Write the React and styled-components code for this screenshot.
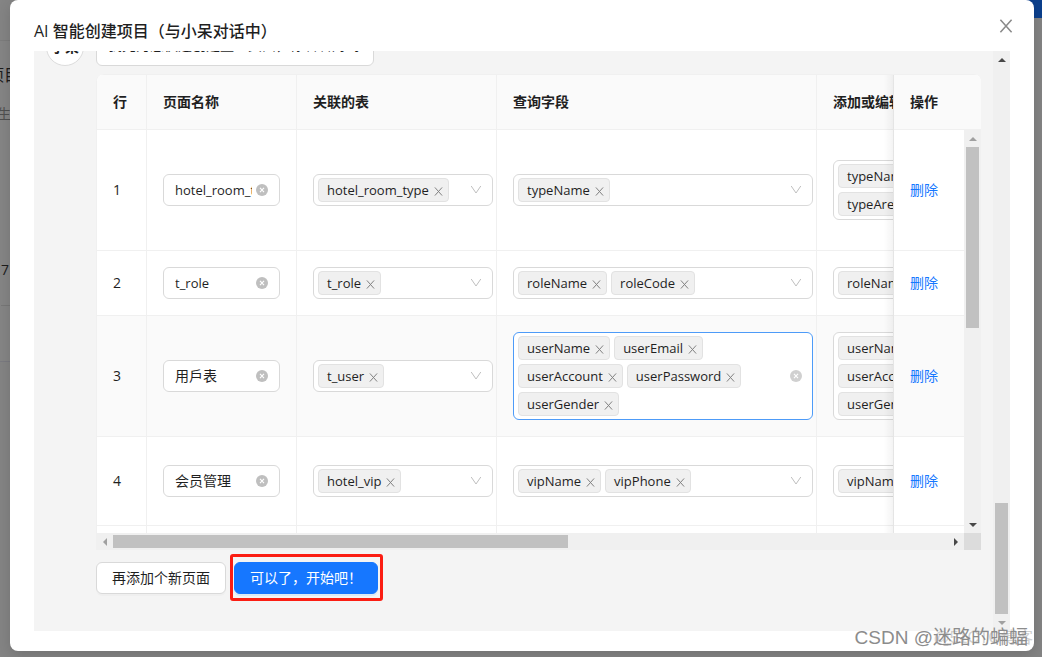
import React from 'react';
import styled, { createGlobalStyle, css } from 'styled-components';

const UI_FONT = "'Open Sans', 'Noto Sans CJK SC', sans-serif";

const Global = createGlobalStyle`
  * { box-sizing: border-box; }
  body {
    margin: 0;
    overflow: hidden;
    font-family: ${UI_FONT};
    font-size: 14px;
    line-height: 22px;
    color: #1f1f1f;
  }
  button, input { font: inherit; color: inherit; }
`;

const Screen = styled.div`
  position: relative;
  height: 100vh;
  min-height: 420px;
  overflow: hidden;
  background: #848484;
`;

const Behind = styled.div`
  position: absolute;
  inset: 0;
  display: flex;
  justify-content: space-between;
`;

const BehindList = styled.div`
  width: 200px;
  color: #1c1c1c;
  padding-top: 40px;
`;

const BehindCard = styled.div`
  border-top: 1px solid #7c7c7c;
  background: #858585;
  height: 322px;
  padding-top: 22px;
  border-bottom: 1px solid #7a7a80;
`;

const BehindTitle = styled.div`
  margin-left: -12px;
  font-size: 16px;
  line-height: 24px;
`;

const BehindNote = styled.div`
  margin: 16px 0 0 -17px;
  color: #505050;
`;

const BehindCount = styled.div`
  margin: 134px 0 0 1px;
  padding-bottom: 24px;
  border-bottom: 1px solid #777777;
`;

const BehindBar = styled.div`
  width: 60px;
  height: 18px;
  background: #0b3f8c;
`;

const Dialog = styled.section`
  position: relative;
  display: flex;
  flex-direction: column;
  height: calc(100% - 6px);
  margin: 0 8px 0 10px;
  padding: 20px 24px;
  background: #ffffff;
  border-radius: 8px;
  box-shadow: 0 4px 14px rgba(0, 0, 0, 0.14);
`;

const DialogHead = styled.header`
  display: flex;
  justify-content: space-between;
  align-items: flex-start;
  height: 31px;
  flex: none;
`;

const DialogTitle = styled.h1`
  margin: 0;
  font-size: 16px;
  line-height: 22px;
  font-weight: 500;
`;

const CloseButton = styled.button`
  display: flex;
  align-items: center;
  justify-content: center;
  width: 22px;
  height: 22px;
  margin: -5px -7px 0 0;
  padding: 0;
  border: 0;
  background: none;
  color: #8a8a8a;
`;

const ChatArea = styled.div`
  flex: 1;
  min-height: 0;
  display: flex;
  background: #f4f4f4;
`;

const ChatScroll = styled.div`
  flex: 1;
  min-width: 0;
  overflow: hidden;
`;

const Message = styled.div`
  display: flex;
  align-items: flex-end;
  gap: 12px;
  margin-top: -31px;
  padding-left: 12px;
`;

const Avatar = styled.div`
  flex: none;
  width: 38px;
  height: 38px;
  border: 1px solid #dcdcdc;
  border-radius: 50%;
  background: #ffffff;
  font-weight: 700;
  line-height: 36px;
  text-align: center;
`;

const Bubble = styled.p`
  margin: 0;
  width: 278px;
  padding: 13px 11px 9px;
  border: 1px solid #d9d9d9;
  border-radius: 6px;
  background: #ffffff;
  white-space: nowrap;
`;

const Work = styled.div`
  margin: 8px 12px 0 62px;
`;

const Grid = styled.div`
  border-left: 1px solid #f0f0f0;
  border-radius: 8px 8px 0 0;
  overflow: hidden;
  background: #ffffff;
`;

const HeadView = styled.div`
  overflow: hidden;
`;

const BodyFrame = styled.div`
  display: grid;
  grid-template-columns: minmax(0, 1fr) 17px;
  grid-template-rows: minmax(0, 1fr) 17px;
  height: 420px;
  margin-left: -1px;
`;

const BodyView = styled.div`
  overflow: hidden;
  border-left: 1px solid #f0f0f0;
`;

const Corner = styled.div`
  background: #dcdcdc;
`;

const DataTable = styled.table`
  width: ${(p) => (p.$gutter ? 1128 : 1111)}px;
  table-layout: fixed;
  border-collapse: separate;
  border-spacing: 0;
`;

const cell = css`
  padding: 0 ${(p) => (p.$wide ? 3 : 16)}px 0 16px;
  border-right: 1px solid #f0f0f0;
  border-bottom: 1px solid #f0f0f0;
  text-align: left;
`;

const pinned = css`
  position: sticky;
  right: 0;
  z-index: 1;
  border-left: 1px solid #f0f0f0;
  border-right: 0;
  &::before {
    content: '';
    position: absolute;
    top: 0;
    bottom: -1px;
    right: 100%;
    width: 10px;
    background: linear-gradient(to left, rgba(5, 5, 5, 0.05), rgba(5, 5, 5, 0));
    pointer-events: none;
  }
`;

const Th = styled.th`
  ${cell}
  height: 56px;
  border-top: 1px solid #f0f0f0;
  background: #fafafa;
  font-weight: 600;
  white-space: nowrap;
  ${(p) => p.$pinned && pinned}
`;

const Td = styled.td`
  ${cell}
  height: ${(p) => p.$height}px;
  background: ${(p) => (p.$active ? '#fafafa' : '#ffffff')};
  ${(p) => p.$pinned && pinned}
`;

const NameBox = styled.label`
  display: flex;
  align-items: center;
  gap: 4px;
  width: 117px;
  height: 32px;
  padding: 0 11px;
  border: 1px solid #d9d9d9;
  border-radius: 6px;
  background: #ffffff;
`;

const NameInput = styled.input`
  flex: 1;
  min-width: 0;
  padding: 0;
  border: 0;
  outline: 0;
  background: none;
  font-size: ${(p) => (p.$latin ? 13 : 14)}px;
`;

const IconButton = styled.button`
  display: flex;
  flex: none;
  padding: 0;
  border: 0;
  background: none;
  color: ${(p) => p.$color || '#bfbfbf'};
`;

const Picker = styled.div`
  display: flex;
  align-items: center;
  min-height: 32px;
  padding: 3px 10px 3px 4px;
  border: 1px solid ${(p) => (p.$focused ? '#4d9bf8' : '#d9d9d9')};
  border-radius: 6px;
  background: #ffffff;
`;

const Tags = styled.ul`
  display: flex;
  flex: 1;
  flex-wrap: wrap;
  gap: 4px;
  margin: 0;
  padding: 0 20px 0 0;
  list-style: none;
`;

const Tag = styled.li`
  display: flex;
  align-items: center;
  gap: 5px;
  height: 24px;
  padding: 0 5px 0 8px;
  border: 1px solid #e2e2e2;
  border-radius: 4px;
  background: #f0f0f0;
  font-size: 13px;
`;

const TagRemove = styled(IconButton)`
  padding-top: 2px;
`;

const RemoveLink = styled.a`
  color: #1677ff;
  text-decoration: none;
`;

const Bar = styled.div`
  display: flex;
  flex-direction: ${(p) => (p.$across ? 'row' : 'column')};
  align-items: center;
  background: #f0f0f0;
  ${(p) => (p.$across ? 'height: 17px;' : 'width: 17px;')}
`;

const BarArrow = styled.button`
  display: flex;
  flex: none;
  align-items: center;
  justify-content: center;
  width: 17px;
  height: 17px;
  padding: 0;
  border: 0;
  background: none;
  color: ${(p) => (p.$dim ? '#a0a0a0' : '#484848')};
`;

const Run = styled.div`
  display: flex;
  flex: 1;
  flex-direction: ${(p) => (p.$across ? 'row' : 'column')};
  justify-content: ${(p) => (p.$end ? 'flex-end' : 'flex-start')};
`;

const Thumb = styled.div`
  background: #c1c1c1;
  ${(p) =>
    p.$across
      ? css`width: ${p.$length}; height: 13px;`
      : css`width: 13px; height: ${p.$length};`}
`;

const Actions = styled.div`
  display: flex;
  gap: 8px;
  padding-top: 12px;
`;

const ActionButton = styled.button`
  height: 32px;
  padding: 0 15px;
  border: 1px solid ${(p) => (p.$primary ? '#1677ff' : '#d9d9d9')};
  border-radius: 6px;
  background: ${(p) => (p.$primary ? '#1677ff' : '#ffffff')};
  color: ${(p) => (p.$primary ? '#ffffff' : '#1f1f1f')};
  box-shadow: 0 2px 0 ${(p) => (p.$primary ? 'rgba(5,145,255,0.1)' : 'rgba(0,0,0,0.02)')};
  white-space: nowrap;
`;

const Marked = styled.div`
  position: relative;
  &::after {
    content: '';
    position: absolute;
    inset: -8px -5px -7px -4px;
    border: 3px solid #fb1d12;
    border-radius: 3px;
    pointer-events: none;
  }
`;

const Watermark = styled.div`
  position: absolute;
  right: 14px;
  bottom: 6px;
  font-family: 'Liberation Sans', 'Noto Sans CJK SC', sans-serif;
  font-size: 19px;
  line-height: 26px;
  color: #8c8c8c;
`;

const GhostMark = styled(Watermark)`
  right: 9px;
  font-size: 16px;
  color: #d0d0d0;
`;

const Cross = ({ size }) => (
  <svg width={size} height={size} viewBox="0 0 10 10" fill="none" stroke="currentColor" aria-hidden="true">
    <path d="M1 .5 9 9.5M9 .5 1 9.5" strokeWidth="1.1" />
  </svg>
);

const ClearMark = () => (
  <svg width="12" height="12" viewBox="0 0 12 12" aria-hidden="true">
    <circle cx="6" cy="6" r="6" fill="currentColor" />
    <path d="M4 3.8 8 8.2M8 3.8 4 8.2" stroke="#fff" strokeWidth="1.1" />
  </svg>
);

const Chevron = () => (
  <svg width="12" height="12" viewBox="0 0 12 12" fill="none" stroke="#bfbfbf" aria-hidden="true">
    <path d="M1.2 2 6 9 10.8 2" />
  </svg>
);

const triangles = {
  up: 'M0 6 4 2 8 6Z',
  down: 'M0 2 4 6 8 2Z',
  left: 'M6 0 2 4 6 8Z',
  right: 'M2 0 6 4 2 8Z',
};

const Arrow = ({ to, dim }) => (
  <BarArrow type="button" tabIndex={-1} aria-label={to} $dim={dim}>
    <svg width="8" height="8" viewBox="0 0 8 8" fill="currentColor" aria-hidden="true">
      <path d={triangles[to]} />
    </svg>
  </BarArrow>
);

function ScrollTrack({ across, length, end, dim }) {
  const [first, last] = across ? ['left', 'right'] : ['up', 'down'];
  return (
    <Bar $across={across}>
      <Arrow to={first} dim={dim === 'first'} />
      <Run $across={across} $end={end}>
        <Thumb $across={across} $length={length} />
      </Run>
      <Arrow to={last} dim={dim === 'last'} />
    </Bar>
  );
}

function TagPicker({ tags, focused }) {
  return (
    <Picker $focused={focused}>
      <Tags>
        {tags.map((tag) => (
          <Tag key={tag}>
            {tag}
            <TagRemove type="button" aria-label={`移除 ${tag}`} $color="#808080">
              <Cross size={9} />
            </TagRemove>
          </Tag>
        ))}
      </Tags>
      {focused ? (
        <IconButton type="button" aria-label="清空" $color="#d0d0d0">
          <ClearMark />
        </IconButton>
      ) : (
        <Chevron />
      )}
    </Picker>
  );
}

const rows = [
  {
    name: 'hotel_room_type',
    height: 121,
    table: ['hotel_room_type'],
    query: ['typeName'],
    edit: ['typeName', 'typePrice', 'typeArea', 'typeBed'],
  },
  { name: 't_role', height: 65, table: ['t_role'], query: ['roleName', 'roleCode'], edit: ['roleName', 'roleCode'] },
  {
    name: '用戶表',
    height: 121,
    active: true,
    table: ['t_user'],
    query: ['userName', 'userEmail', 'userAccount', 'userPassword', 'userGender'],
    edit: ['userName', 'userEmail', 'userAccount', 'userPassword', 'userGender'],
  },
  { name: '会员管理', height: 89, table: ['hotel_vip'], query: ['vipName', 'vipPhone'], edit: ['vipName', 'vipPhone'] },
  { name: '', height: 89, table: [], query: [], edit: [] },
];

const Columns = ({ last }) => (
  <colgroup>
    {[50, 150, 200, 320, 320, last].map((width, i) => (
      <col key={i} width={width} />
    ))}
  </colgroup>
);

function PageTable() {
  return (
    <Grid>
      <HeadView>
        <DataTable $gutter>
          <Columns last={88} />
          <thead>
            <tr>
              <Th>行</Th>
              <Th>页面名称</Th>
              <Th>关联的表</Th>
              <Th>查询字段</Th>
              <Th>添加或编辑字段</Th>
              <Th $pinned>操作</Th>
            </tr>
          </thead>
        </DataTable>
      </HeadView>
      <BodyFrame>
        <BodyView>
          <DataTable>
            <Columns last={71} />
            <tbody>
              {rows.map((row, i) => {
                const look = { $height: row.height, $active: row.active };
                return (
                  <tr key={i}>
                    <Td {...look}>{i + 1}</Td>
                    <Td {...look}>
                      <NameBox>
                        <NameInput aria-label="页面名称" defaultValue={row.name} $latin={/^\w+$/.test(row.name)} />
                        <IconButton type="button" aria-label="清空名称">
                          <ClearMark />
                        </IconButton>
                      </NameBox>
                    </Td>
                    <Td {...look} $wide><TagPicker tags={row.table} /></Td>
                    <Td {...look} $wide><TagPicker tags={row.query} focused={row.active} /></Td>
                    <Td {...look} $wide><TagPicker tags={row.edit} /></Td>
                    <Td {...look} $pinned><RemoveLink href="#remove">删除</RemoveLink></Td>
                  </tr>
                );
              })}
            </tbody>
          </DataTable>
        </BodyView>
        <ScrollTrack length="49%" dim="first" />
        <ScrollTrack across length="54.5%" dim="first" />
        <Corner />
      </BodyFrame>
    </Grid>
  );
}

export default function App() {
  return (
    <Screen>
      <Global />
      <Behind>
        <BehindList>
          <BehindCard>
            <BehindTitle>项目</BehindTitle>
            <BehindNote>发生</BehindNote>
            <BehindCount>7</BehindCount>
          </BehindCard>
        </BehindList>
        <BehindBar />
      </Behind>
      <Dialog role="dialog" aria-labelledby="dialog-title">
        <DialogHead>
          <DialogTitle id="dialog-title">AI 智能创建项目（与小呆对话中）</DialogTitle>
          <CloseButton type="button" aria-label="关闭">
            <Cross size={14} />
          </CloseButton>
        </DialogHead>
        <ChatArea>
          <ChatScroll>
            <Message>
              <Avatar>小呆</Avatar>
              <Bubble>我先为您快速创建量些页面，你看看对吗?</Bubble>
            </Message>
            <Work>
              <PageTable />
              <Actions>
                <ActionButton type="button">再添加个新页面</ActionButton>
                <Marked>
                  <ActionButton type="button" $primary>可以了，开始吧！</ActionButton>
                </Marked>
              </Actions>
            </Work>
          </ChatScroll>
          <ScrollTrack length="111px" end dim="last" />
        </ChatArea>
      </Dialog>
      <GhostMark aria-hidden="true">@51CTO博客</GhostMark>
      <Watermark>CSDN @迷路的蝙蝠</Watermark>
    </Screen>
  );
}
